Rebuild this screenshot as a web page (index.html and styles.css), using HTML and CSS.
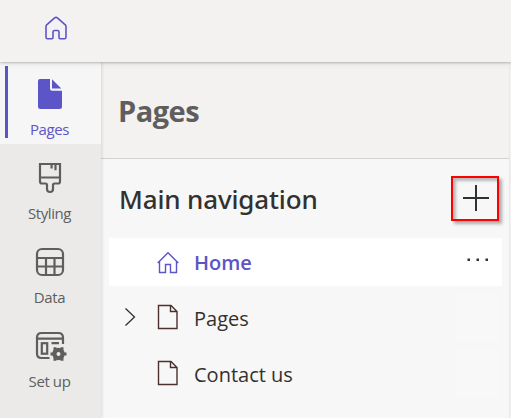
FILE: index.html
```html
<!DOCTYPE html>
<html lang="en">
<head>
<meta charset="utf-8">
<title>Pages</title>
<link rel="stylesheet" href="styles.css">
</head>
<body>
<header class="topbar">
  <svg class="top-home" width="24" height="24" viewBox="0 0 24 24"><path d="M2 10.500Q2 9.500 2.700 8.800L10.600 1.900Q12 .8 13.400 1.900L21.300 8.800Q22 9.500 22 10.500V21Q22 22.700 20.500 22.700H16Q15 22.700 15 21.500V16Q15 14.500 13.500 14.500H10.500Q9 14.500 9 16V21.500Q9 22.700 8 22.700H3.500Q2 22.700 2 21Z"/></svg>
</header>
<div class="workspace">
  <nav class="rail">
    <a class="rail-item active">
      <svg width="32" height="32" viewBox="0 0 32 32"><path class="fill" d="M6 1H16V10.500Q16 12.700 18.200 12.700H28V28.500Q28 31 25.500 31H6.500Q4 31 4 28.500V3Q4 1 6 1ZM18 1.300 27.300 10.600H18Z"/></svg>
      <span>Pages</span>
    </a>
    <a class="rail-item">
      <svg width="32" height="32" viewBox="0 0 32 32"><path d="M6.500 2H26V19.500Q26 21.500 24 21.500H20.500Q19 21.500 19 23V27Q19 30 16 30T13 27V23Q13 21.500 11.500 21.500H8Q6 21.500 6 19.500V2ZM6 15.500H26M17.600 2V6.500M21.500 2V8.300"/></svg>
      <span>Styling</span>
    </a>
    <a class="rail-item">
      <svg width="32" height="32" viewBox="0 0 32 32"><rect x="3" y="3" width="26" height="26" rx="5"/><path d="M3 12H29M3 20.500H29M12 12V29M20.500 12V29"/></svg>
      <span>Data</span>
    </a>
    <a class="rail-item">
      <svg class="setup" width="32" height="32" viewBox="0 0 32 32"><path d="M29 14V7.500Q29 3 24.500 3H7.500Q3 3 3 7.500V23.500Q3 28 7.500 28H15.500M3 8.700H29M17.500 13.200H25"/><rect x="7.800" y="13.200" width="5.400" height="10.500"/><circle cx="24.500" cy="24" r="4.100"/><path class="teeth" d="M28 25.500V30.800M21 25.500V30.800M28 22.500V17.200M21 22.500V17.200M20 24H16.500M29 24H32.500"/></svg>
      <span>Set up</span>
    </a>
  </nav>
  <main class="panel">
    <header class="panel-head"><h1>Pages</h1></header>
    <div class="section-head">
      <h2>Main navigation</h2>
      <button class="add" aria-label="Add page"><svg width="26" height="26" viewBox="0 0 26 26"><path d="M13 0V26M0 13H26"/></svg></button>
    </div>
    <div class="tree">
      <div class="row selected">
        <span class="caret"></span>
        <svg class="icon" width="22" height="26" viewBox="0 0 22 26"><path d="M.7 14 11 3.700 21.300 14M2.500 12.500V23.500H8.500V15.500H13.500V23.500H19.500V12.500"/></svg>
        <span class="name">Home</span>
        <svg class="more" width="22" height="4" viewBox="0 0 22 4"><path d="M.5 .5h2.500v2.500H.5zM9.500 .5H12v2.500H9.500zM18.500 .5H21v2.500h-2.500z"/></svg>
      </div>
      <div class="row">
        <span class="caret"><svg width="11" height="18" viewBox="0 0 11 18"><path d="M.5 .5 9.500 9 .5 17.500"/></svg></span>
        <svg class="icon doc" width="22" height="26" viewBox="0 0 22 26"><path d="M1.500 .5H14L20 6.500V23.500H1.500ZM13.500 .5V6.500H20"/></svg>
        <span class="name">Pages</span>
        <span class="slot"></span>
      </div>
      <div class="row">
        <span class="caret"></span>
        <svg class="icon doc" width="22" height="26" viewBox="0 0 22 26"><path d="M1.500 .5H14L20 6.500V23.500H1.500ZM13.500 .5V6.500H20"/></svg>
        <span class="name">Contact us</span>
        <span class="slot"></span>
      </div>
    </div>
  </main>
</div>
</body>
</html>
```
FILE: styles.css
```css
* { box-sizing: border-box; }
body {
  margin: 0;
  width: 511px;
  height: 418px;
  overflow: hidden;
  background: #f3f2f1;
  font-family: "Open Sans", "Noto Sans", sans-serif;
  color: #323130;
}
svg { display: block; flex: none; fill: none; stroke: currentColor; overflow: visible; }
.topbar {
  position: relative;
  z-index: 2;
  height: 62px;
  padding: 16px 0 0 44px;
  background: #f3f2f1;
  box-shadow: 0 1px 2px rgba(0,0,0,.2), 0 1px 7px rgba(0,0,0,.1);
}
.top-home { color: #5b55c8; stroke-width: 1.6; }
.workspace { display: flex; height: 356px; }
.rail {
  position: relative;
  z-index: 1;
  width: 101px;
  background: #ebeae9;
  box-shadow: 1px 0 3px rgba(0,0,0,.12);
}
.rail-item {
  display: flex;
  flex-direction: column;
  align-items: center;
  height: 84px;
  padding: 18px 2px 0 0;
  color: #605e5c;
  stroke-width: 2.2;
  font-size: 15px;
  line-height: 20px;
  letter-spacing: -.4px;
}
.rail-item span { margin-top: 9px; white-space: nowrap; }
.rail-item.active {
  height: 82px;
  padding-top: 16px;
  background: linear-gradient(#5b55c8, #5b55c8) 5px 4px / 3px 72px no-repeat, #f6f6f6;
  color: #5b55c8;
}
.fill { fill: currentColor; stroke: none; }
.setup circle { stroke-width: 4.2; }
.teeth { stroke-width: 3; }
.panel { flex: 1; margin-right: 1px; background: #f7f7f7; border-right: 1px solid #e8e8e8; }
.panel-head {
  display: flex;
  align-items: center;
  height: 97px;
  padding: 2px 0 0 17px;
  background: #f3f2f1;
  border-bottom: 1px solid #d2d2d2;
}
h1, h2 { margin: 0; white-space: nowrap; }
h1 { font-size: 29px; line-height: 40px; font-weight: 700; color: #605e5c; letter-spacing: -.5px; }
.section-head {
  display: flex;
  align-items: center;
  justify-content: space-between;
  height: 79px;
  padding: 0 10px 1px 18px;
}
h2 { margin-top: 2px; font-family: "Noto Sans", sans-serif; font-size: 26px; line-height: 36px; font-weight: 500; letter-spacing: -.15px; }
.add {
  display: flex;
  align-items: center;
  justify-content: center;
  width: 48px;
  height: 45px;
  padding: 0 0 1px 2px;
  border: 2px solid #f00;
  background: #f7f7f7;
  color: #323130;
  stroke-width: 2;
  box-shadow: 3px 3px 3px rgba(0,0,0,.3), inset 3px 3px 3px rgba(0,0,0,.25);
}
.tree { display: flex; flex-direction: column; gap: 8px; padding: 0 7px 0 8px; }
.row {
  display: flex;
  align-items: center;
  height: 48px;
  padding-left: 16px;
}
.selected { background: #fff; color: #5b55c8; }
.caret { width: 32px; margin-top: -2px; stroke-width: 1.3; }
.icon { margin-right: 15px; stroke-width: 1.4; }
.doc { stroke: #4b302e; }
.name { flex: 1; margin-top: 2px; font-size: 20px; line-height: 28px; white-space: nowrap; }
.selected .name { font-weight: 600; }
.more { margin: 0 13px 4px 0; color: #323130; fill: currentColor; stroke: none; }
.slot { width: 45px; height: 48px; margin-right: 2px; background: #f8f8f8; }
```
